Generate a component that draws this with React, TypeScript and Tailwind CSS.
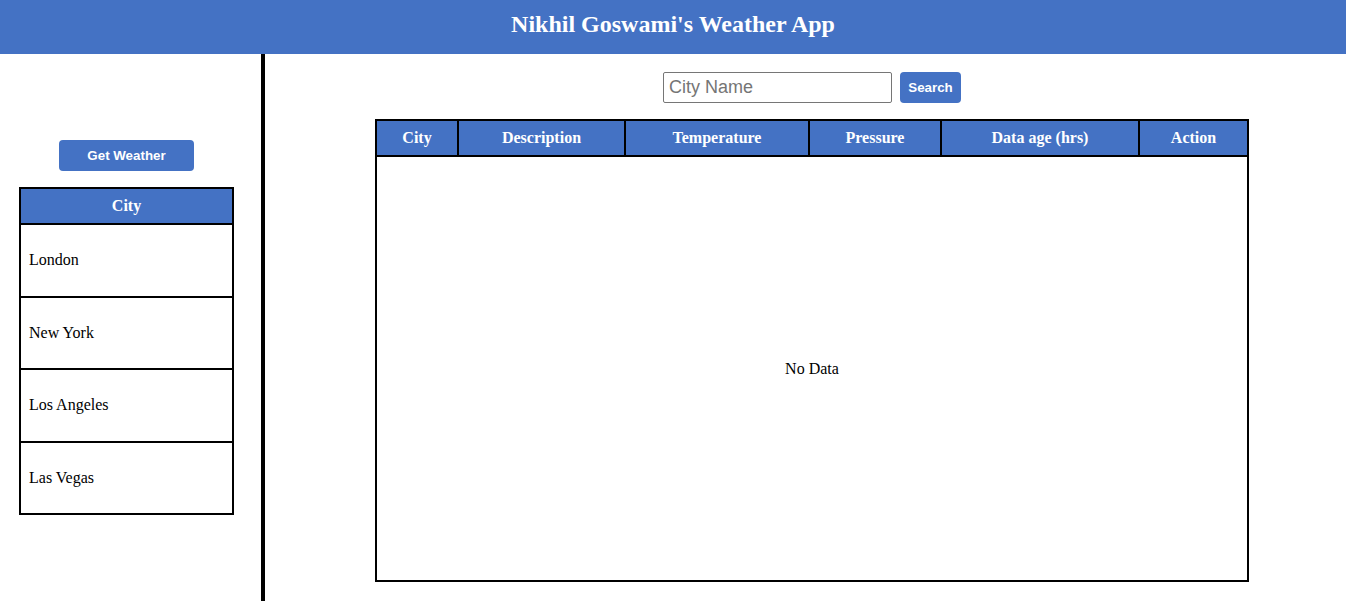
import React from "react";

const cities = ["London", "New York", "Los Angeles", "Las Vegas"];

const columns = [
  { label: "City", w: "w-[82px]" },
  { label: "Description", w: "w-[167px]" },
  { label: "Temperature", w: "w-[184px]" },
  { label: "Pressure", w: "w-[132px]" },
  { label: "Data age (hrs)", w: "w-[198px]" },
  { label: "Action", w: "w-[109px]" },
];

const App = () => {
  return (
    <div className="flex h-[601px] flex-col overflow-hidden bg-white font-['Liberation_Serif',serif] text-black">
      {/* header */}
      <header className="flex h-[54px] shrink-0 items-center justify-center bg-[#4472c4] pb-[6px]">
        <h1 className="text-[24px] font-bold text-white">Nikhil Goswami's Weather App</h1>
      </header>

      <div className="flex flex-1">
        {/* sidebar */}
        <aside className="flex w-[265px] shrink-0 flex-col border-r-[4px] border-black pl-[19px] pr-[27px] pt-[86px]">
          <div className="flex justify-center">
            <button className="h-[31px] w-[135px] rounded-[4px] bg-[#4472c4] font-['Liberation_Sans',sans-serif] text-[13.33px] font-bold text-white">
              Get Weather
            </button>
          </div>
          <table className="mt-[16px] w-[215px] border-collapse border-2 border-black">
            <thead>
              <tr>
                <th className="h-[36px] border-2 border-black bg-[#4472c4] text-[16px] font-bold text-white">City</th>
              </tr>
            </thead>
            <tbody>
              {cities.map((c) => (
                <tr key={c}>
                  <td className="h-[72.5px] border-2 border-black pl-[8px] text-left text-[16px]">{c}</td>
                </tr>
              ))}
            </tbody>
          </table>
        </aside>

        {/* main */}
        <main className="flex flex-1 flex-col items-center pl-[13px] pt-[18px]">
          <div className="flex items-center gap-[8px]">
            <input
              placeholder="City Name"
              className="h-[31px] w-[229px] rounded-[2px] border border-[#767676] px-[5px] font-['Liberation_Sans',sans-serif] text-[18px] placeholder:text-[#757575]"
            />
            <button className="h-[31px] w-[61px] rounded-[4px] bg-[#4472c4] font-['Liberation_Sans',sans-serif] text-[13.33px] font-bold text-white">
              Search
            </button>
          </div>
          <table className="mt-[16px] w-[874px] table-fixed border-collapse border-2 border-black">
            <thead>
              <tr>
                {columns.map((col) => (
                  <th
                    key={col.label}
                    className={`${col.w} h-[36px] border-2 border-black bg-[#4472c4] text-[16px] font-bold text-white`}
                  >
                    {col.label}
                  </th>
                ))}
              </tr>
            </thead>
            <tbody>
              <tr>
                <td colSpan={6} className="h-[425px] border-2 border-black text-center text-[16px]">
                  No Data
                </td>
              </tr>
            </tbody>
          </table>
        </main>
      </div>
    </div>
  );
};

export default App;
